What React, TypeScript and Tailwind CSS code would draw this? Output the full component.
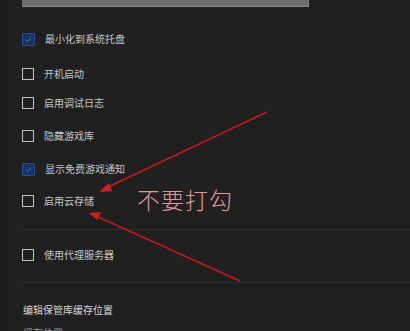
import { type ReactNode } from "react";

const cjk = { fontFamily: '"Noto Sans CJK SC", "Noto Sans", sans-serif' };

function Checkbox({ checked }: { checked?: boolean }): JSX.Element {
  if (checked) {
    return (
      <span className="flex h-[13px] w-[13px] shrink-0 items-center justify-center rounded-[1px] border border-[#27508c] bg-[#16355f]">
        <svg viewBox="0 0 12 12" className="h-[9px] w-[9px]">
          <path d="M2.2 6.3 4.8 8.7 9.8 3.3" fill="none" stroke="#4a7cc0" strokeWidth="1.3" />
        </svg>
      </span>
    );
  }
  return <span className="h-[12px] w-[12px] shrink-0 border-[1.5px] border-[#c4c4c4]" />;
}

function Row({ label, checked, className }: { label: string; checked?: boolean; className: string }): JSX.Element {
  return (
    <div className={`flex h-5 items-center gap-[10px] pl-[22px] ${className}`}>
      <Checkbox checked={checked} />
      <span className="text-[10px] leading-none text-[#c6c6c6]" style={cjk}>
        {label}
      </span>
    </div>
  );
}

function Sep({ className }: { className: string }): JSX.Element {
  return <div className={`ml-[22px] h-px bg-[#2c2c2c] ${className}`} />;
}

function Overlay({ children }: { children: ReactNode }): JSX.Element {
  return <div className="pointer-events-none absolute inset-0">{children}</div>;
}

export default function App(): JSX.Element {
  return (
    <div className="relative h-[331px] w-[410px] overflow-hidden bg-[#202020]">
      <div className="flex h-full">
        <div className="w-[7px] shrink-0 bg-[#1c1c1c]" />
        <div className="flex-1 -ml-[7px]">
          <div className="ml-[22px] h-[7px] w-[287px] border-b border-r border-[#8a8a8a] bg-[#6d6d6d]" />
          <Row label="最小化到系统托盘" checked className="mt-[22px]" />
          <Row label="开机启动" className="mt-[15px]" />
          <Row label="启用调试日志" className="mt-[9px]" />
          <Row label="隐藏游戏库" className="mt-[13px]" />
          <Row label="显示免费游戏通知" checked className="mt-[13px]" />
          <Row label="启用云存储" className="mt-[12px]" />
          <Sep className="mt-[18px]" />
          <Row label="使用代理服务器" className="mt-[15px]" />
          <Sep className="mt-[17px]" />
          <div className="mt-[17px] flex h-5 items-center pl-[23px]">
            <span className="text-[10px] leading-none text-[#d8d8d8]" style={cjk}>
              编辑保管库缓存位置
            </span>
          </div>
          <div className="mt-[8px] pl-[23px] text-[10px] leading-none text-[#9a9a9a]" style={cjk}>
            缓存位置
          </div>
        </div>
      </div>
      <Overlay>
        <svg width="410" height="331" className="absolute inset-0">
          <line x1="267" y1="112" x2="106" y2="188" stroke="#c21b1b" strokeWidth="1.6" />
          <polygon points="99,192 109,183 112,191" fill="#d01d1d" />
          <line x1="240" y1="281" x2="96" y2="216" stroke="#c21b1b" strokeWidth="1.6" />
          <polygon points="89,213 101,212 97,220" fill="#d01d1d" />
        </svg>
        <span
          className="absolute left-[137px] top-[188px] text-[23px] font-light leading-none tracking-[1px] text-[#e3979c]"
          style={cjk}
        >
          不要打勾
        </span>
      </Overlay>
    </div>
  );
}
